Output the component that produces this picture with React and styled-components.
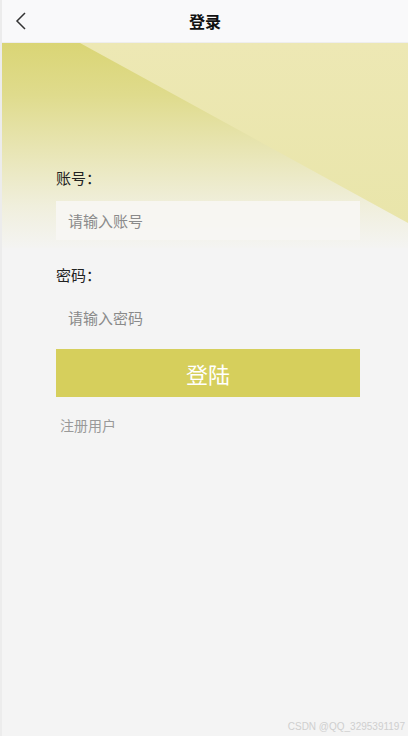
import React from "react";
import styled, { createGlobalStyle } from "styled-components";

const GlobalStyle = createGlobalStyle`
  html, body {
    margin: 0;
    padding: 0;
    background: #f4f4f4;
    font-family: "Microsoft YaHei", "Noto Sans CJK SC", "Noto Sans", sans-serif;
  }
  * { box-sizing: border-box; }
`;

const Page = styled.div`
  width: 408px;
  min-height: 736px;
  display: flex;
  flex-direction: column;
  background: #f4f4f4;
  border-left: 2px solid #ececec;
`;

const Header = styled.header`
  height: 43px;
  display: flex;
  align-items: center;
  justify-content: center;
  position: relative;
  background: #f9f9fa;
  border-bottom: 1px solid #eeeeee;
`;

const Back = styled.button`
  position: absolute;
  left: 8px;
  top: 9px;
  width: 22px;
  height: 24px;
  border: 0;
  padding: 0;
  background: transparent;
  display: flex;
  align-items: center;
  justify-content: center;
`;

const Title = styled.h1`
  margin: 0;
  font-size: 16px;
  font-weight: 700;
  color: #111;
`;

const Body = styled.main`
  flex: 1;
  position: relative;
  display: flex;
  flex-direction: column;
  padding: 125px 48px 0 54px;
  background: linear-gradient(
    to bottom,
    #dad575 0%,
    #dfdb8c 25%,
    #e9e6b8 55%,
    #f0efdd 80%,
    #f4f4f2 100%
  ) top / 100% 205px no-repeat, #f4f4f4;

  &::before {
    content: "";
    position: absolute;
    left: 78px;
    top: 0;
    right: 0;
    height: 180px;
    clip-path: polygon(0 0, 100% 0, 100% 100%);
    background: linear-gradient(to bottom, #ede8b4, #e9e5aa);
  }
  & > * { position: relative; }
`;

const Label = styled.label`
  font-size: 15px;
  line-height: 20px;
  color: #222;
`;

const Input = styled.input`
  margin: 13px 0 25px;
  height: 39px;
  width: 304px;
  border: 0;
  outline: none;
  padding: 0 12px;
  font-size: 15px;
  font-family: inherit;
  color: #333;
  background: ${(p) => (p.$top ? "rgba(247,246,243,0.92)" : "#f4f4f4")};
  &::placeholder { color: #8a8a8a; }
`;

const Submit = styled.button`
  margin-top: -13px;
  width: 304px;
  height: 48px;
  border: 0;
  background: #d6cf5c;
  color: #fff;
  font-size: 22px;
  font-family: inherit;
`;

const Register = styled.a`
  margin: 18px 0 0 4px;
  font-size: 14px;
  line-height: 20px;
  color: #999;
`;

const Watermark = styled.div`
  margin: auto -48px 0 0;
  padding: 0 3px 4px 0;
  text-align: right;
  font-family: "Liberation Sans", Arial, sans-serif;
  font-size: 10px;
  color: #cfcfcf;
`;

export default function App() {
  return (
    <>
      <GlobalStyle />
      <Page>
        <Header>
          <Back aria-label="back">
            <svg width="14" height="20" viewBox="0 0 14 20">
              <path d="M11 2 L3 10 L11 18" fill="none" stroke="#333" strokeWidth="1.5" />
            </svg>
          </Back>
          <Title>登录</Title>
        </Header>
        <Body>
          <Label>账号：</Label>
          <Input $top placeholder="请输入账号" />
          <Label>密码：</Label>
          <Input type="password" placeholder="请输入密码" />
          <Submit>登陆</Submit>
          <Register>注册用户</Register>
          <Watermark>CSDN @QQ_3295391197</Watermark>
        </Body>
      </Page>
    </>
  );
}
